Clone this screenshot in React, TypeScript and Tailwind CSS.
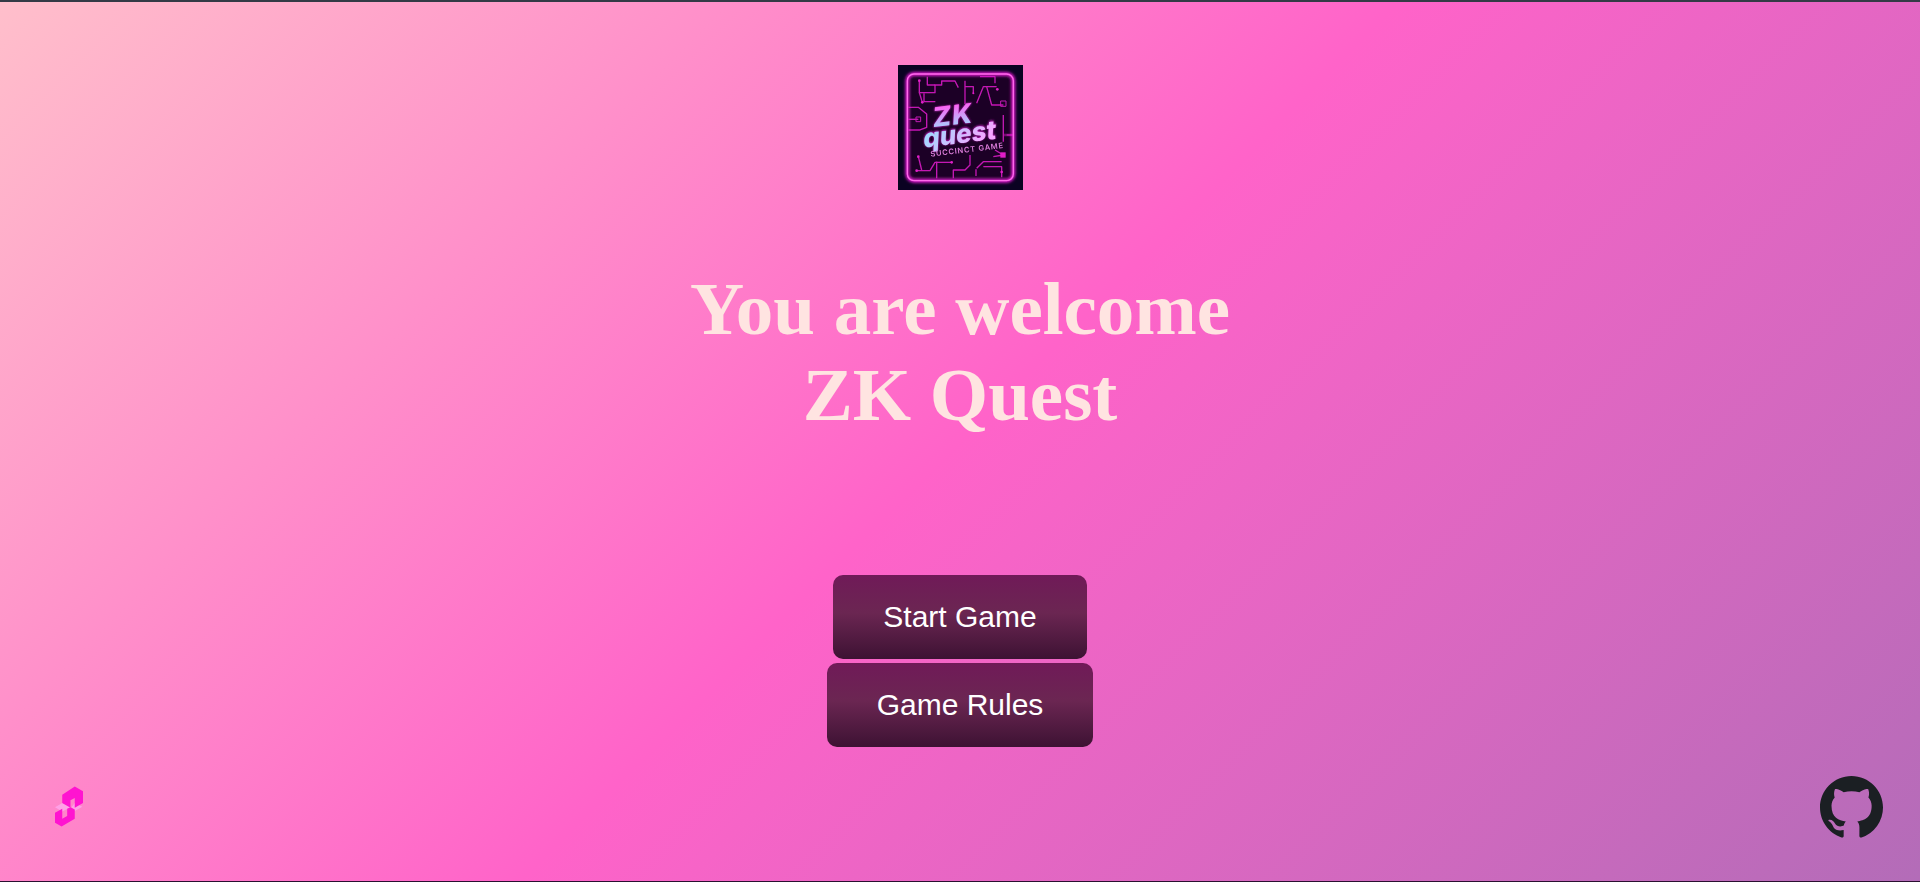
// traced in the reference's 3x crop coordinates, scaled down in Logo
const circuits = [
  "M118 92v36h47l0-23h20v-12h40l10 20",
  "M142 80v25h23",
  "M118 128l9 29",
  "M132 130v25h34",
  "M255 92v70",
  "M255 110h25v20",
  "M290 160l20-50h40",
  "M300 80h45v20",
  "M320 110l15 55h35",
  "M85 172h30l25 20v40l-20 8h-35",
  "M115 208l-30 0",
  "M370 195v80",
  "M380 255h20",
  "M345 300l25 15",
  "M115 320l10 40",
  "M110 362h40l15-25h50",
  "M170 335v50",
  "M270 315v30l-15 15h-35v25",
  "M290 355l20-20h55",
  "M310 350h55v32",
  "M288 358v20",
  "M340 320l30-5",
];

function Logo() {
  return (
    <svg viewBox="0 0 125 125" className="w-[125px] h-[125px] shrink-0">
      <defs>
        <filter id="soft">
          <feGaussianBlur stdDeviation="0.4" />
        </filter>
        <filter id="glow" x="-20%" y="-20%" width="140%" height="140%">
          <feGaussianBlur stdDeviation="4" />
        </filter>
        <filter id="textGlow" x="-20%" y="-20%" width="140%" height="140%">
          <feGaussianBlur stdDeviation="1.2" />
        </filter>
        <linearGradient id="zk" x1="0" y1="0" x2="0" y2="1">
          <stop offset="0.15" stopColor="#ff5cf2" />
          <stop offset="0.9" stopColor="#9fdcff" />
        </linearGradient>
        <linearGradient id="quest" x1="0" y1="0" x2="1" y2="0.4">
          <stop offset="0" stopColor="#8fe4ff" />
          <stop offset="1" stopColor="#f6a6ff" />
        </linearGradient>
      </defs>
      <rect width="125" height="125" fill="#0a0222" />
      <g filter="url(#soft)">
        <g transform="translate(-18 -15) scale(0.3333)">
          <rect x="82" y="72" width="318" height="320" rx="20" fill="#1c0326" />
          <g fill="none" stroke="#c417b4" strokeWidth="4" strokeLinejoin="round">
            {circuits.map((d, i) => (
              <path key={i} d={d} />
            ))}
            <rect x="108" y="201" width="14" height="14" strokeWidth="3" />
            <rect x="362" y="153" width="16" height="16" strokeWidth="3" />
            <path d="M372 255h24" strokeWidth="8" opacity="0.5" />
          </g>
          <g fill="#e01cc8">
            <circle cx="118" cy="92" r="4" />
            <circle cx="127" cy="157" r="4" />
            <circle cx="352" cy="118" r="4" />
            <circle cx="280" cy="130" r="3" />
            <circle cx="215" cy="337" r="4" />
            <circle cx="115" cy="320" r="4" />
            <circle cx="110" cy="362" r="4" />
            <circle cx="365" cy="366" r="4" />
            <rect x="361" y="307" width="16" height="16" />
          </g>
          <rect x="82" y="72" width="318" height="320" rx="20" fill="none" stroke="#e018d0" strokeWidth="12" filter="url(#glow)" />
          <rect x="82" y="72" width="318" height="320" rx="20" fill="none" stroke="#ff6aec" strokeWidth="4" />
        </g>
        <g fontFamily="Inter, sans-serif" fontWeight="800" textAnchor="middle" transform="rotate(-7 62 60)">
          <g transform="skewX(-10)">
            <g filter="url(#textGlow)" fill="#d81fd0">
              <text x="65" y="59" fontSize="27" letterSpacing="1">ZK</text>
              <text x="73" y="78" fontSize="26">quest</text>
            </g>
            <text x="65" y="59" fontSize="27" fill="url(#zk)" letterSpacing="1">ZK</text>
            <text x="73" y="78" fontSize="26" fill="url(#quest)">quest</text>
          </g>
          <text x="66" y="88" fontSize="7.6" fontWeight="600" letterSpacing="0.7" fill="#d97ad8">SUCCINCT GAME</text>
        </g>
      </g>
    </svg>
  );
}

function SuccinctMark() {
  return (
    <svg viewBox="0 0 85 122" className="w-[28px] h-[41px]">
      <path d="M0 63L22 50L47 63L22 76zM60 50L83 62L60 75L50 63z" fill="#ffa0e6" />
      <path d="M22 25L60 0L85 15V50L60 65V35L47 42V65L22 50z" fill="#ff14d0" />
      <path d="M60 70V98L20 122L0 110V80L22 68V98L37 90V68L47 63z" fill="#ff14d0" />
    </svg>
  );
}

function GithubMark() {
  return (
    <svg viewBox="0 0 16 16" className="w-[63px] h-[63px]" fill="#1b1f23">
      <path d="M8 0C3.58 0 0 3.58 0 8c0 3.54 2.29 6.53 5.47 7.59.4.07.55-.17.55-.38 0-.19-.01-.82-.01-1.49-2.01.37-2.53-.49-2.69-.94-.09-.23-.48-.94-.82-1.13-.28-.15-.68-.52-.01-.53.63-.01 1.08.58 1.23.82.72 1.21 1.87.87 2.33.66.07-.52.28-.87.51-1.07-1.78-.2-3.64-.89-3.64-3.95 0-.87.31-1.59.82-2.15-.08-.2-.36-1.02.08-2.12 0 0 .67-.21 2.2.82.64-.18 1.32-.27 2-.27.68 0 1.36.09 2 .27 1.53-1.04 2.2-.82 2.2-.82.44 1.1.16 1.92.08 2.12.51.56.82 1.27.82 2.15 0 3.07-1.87 3.75-3.65 3.95.29.25.54.73.54 1.48 0 1.07-.01 1.93-.01 2.2 0 .21.15.46.55.38A8.013 8.013 0 0016 8c0-4.42-3.58-8-8-8z" />
    </svg>
  );
}

function MenuButton({ label }: { label: string }) {
  return (
    <button className="h-[84px] px-[50px] pb-[2px] rounded-[10px] text-white text-[30px] font-['Liberation_Sans',Arial,sans-serif] bg-[linear-gradient(180deg,#701a58_0%,#6b2652_45%,#3d1233_100%)]">
      {label}
    </button>
  );
}

export default function App() {
  return (
    <div className="relative h-[882px] overflow-hidden border-t-2 border-b border-t-[#343a46] border-b-[#2a1030] bg-[linear-gradient(135deg,#ffbfcb_0%,#ff63c9_50%,#b36cb8_100%)] flex flex-col items-center">
      <div className="mt-[63px]">
        <Logo />
      </div>
      <h1 className="mt-[76px] text-center text-[#ffe4e1] text-[75px] leading-[86px] font-bold font-['Liberation_Serif','Times_New_Roman',serif]">
        You are welcome
        <br />
        ZK Quest
      </h1>
      <div className="mt-[137px] flex flex-col items-center gap-1">
        <MenuButton label="Start Game" />
        <MenuButton label="Game Rules" />
      </div>
      <div className="absolute left-[55px] bottom-[54px]">
        <SuccinctMark />
      </div>
      <div className="absolute right-[37px] bottom-[42px]">
        <GithubMark />
      </div>
    </div>
  );
}
